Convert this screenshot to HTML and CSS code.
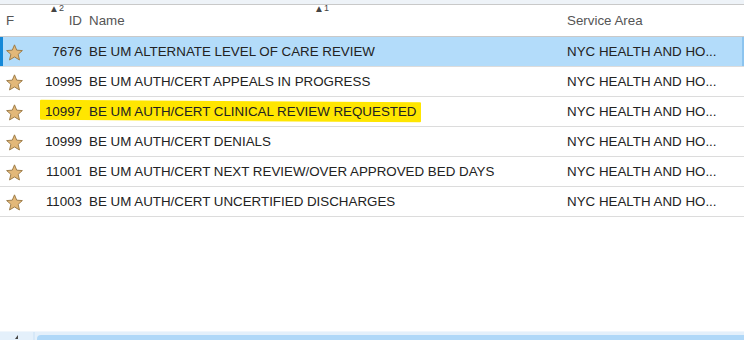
FILE: index.html
```html
<!DOCTYPE html>
<html>
<head>
<meta charset="utf-8">
<link rel="stylesheet" href="styles.css">
</head>
<body>
<div class="grid">
  <div class="topband"></div>
  <div class="row head">
    <div class="cell c-f">F</div>
    <div class="cell c-id"><span class="sort s-id">&#9650;<sup>2</sup></span>ID</div>
    <div class="cell c-name"><span class="sort s-name">&#9650;<sup>1</sup></span>Name</div>
    <div class="cell c-sa">Service Area</div>
  </div>
  <div class="body">
    <div class="row sel">
      <div class="cell c-f"><svg class="star" viewBox="0 0 16 16"><path d="M8 0.8l2.1 5 5.3.4-4 3.5 1.3 5.3L8 12.2l-4.7 2.8 1.3-5.3-4-3.5 5.3-.4z"/></svg></div>
      <div class="cell c-id">7676</div>
      <div class="cell c-name">BE UM ALTERNATE LEVEL OF CARE REVIEW</div>
      <div class="cell c-sa">NYC HEALTH AND HO...</div>
    </div>
    <div class="row">
      <div class="cell c-f"><svg class="star" viewBox="0 0 16 16"><path d="M8 0.8l2.1 5 5.3.4-4 3.5 1.3 5.3L8 12.2l-4.7 2.8 1.3-5.3-4-3.5 5.3-.4z"/></svg></div>
      <div class="cell c-id">10995</div>
      <div class="cell c-name">BE UM AUTH/CERT APPEALS IN PROGRESS</div>
      <div class="cell c-sa">NYC HEALTH AND HO...</div>
    </div>
    <div class="row">
      <div class="mark"></div>
      <div class="cell c-f"><svg class="star" viewBox="0 0 16 16"><path d="M8 0.8l2.1 5 5.3.4-4 3.5 1.3 5.3L8 12.2l-4.7 2.8 1.3-5.3-4-3.5 5.3-.4z"/></svg></div>
      <div class="cell c-id">10997</div>
      <div class="cell c-name">BE UM AUTH/CERT CLINICAL REVIEW REQUESTED</div>
      <div class="cell c-sa">NYC HEALTH AND HO...</div>
    </div>
    <div class="row">
      <div class="cell c-f"><svg class="star" viewBox="0 0 16 16"><path d="M8 0.8l2.1 5 5.3.4-4 3.5 1.3 5.3L8 12.2l-4.7 2.8 1.3-5.3-4-3.5 5.3-.4z"/></svg></div>
      <div class="cell c-id">10999</div>
      <div class="cell c-name">BE UM AUTH/CERT DENIALS</div>
      <div class="cell c-sa">NYC HEALTH AND HO...</div>
    </div>
    <div class="row">
      <div class="cell c-f"><svg class="star" viewBox="0 0 16 16"><path d="M8 0.8l2.1 5 5.3.4-4 3.5 1.3 5.3L8 12.2l-4.7 2.8 1.3-5.3-4-3.5 5.3-.4z"/></svg></div>
      <div class="cell c-id">11001</div>
      <div class="cell c-name">BE UM AUTH/CERT NEXT REVIEW/OVER APPROVED BED DAYS</div>
      <div class="cell c-sa">NYC HEALTH AND HO...</div>
    </div>
    <div class="row">
      <div class="cell c-f"><svg class="star" viewBox="0 0 16 16"><path d="M8 0.8l2.1 5 5.3.4-4 3.5 1.3 5.3L8 12.2l-4.7 2.8 1.3-5.3-4-3.5 5.3-.4z"/></svg></div>
      <div class="cell c-id">11003</div>
      <div class="cell c-name">BE UM AUTH/CERT UNCERTIFIED DISCHARGES</div>
      <div class="cell c-sa">NYC HEALTH AND HO...</div>
    </div>
  </div>
  <div class="hscroll">
    <div class="arrow-btn"><span class="arrow"></span></div>
    <div class="thumb"></div>
  </div>
</div>
</body>
</html>
```

FILE: styles.css
```css
html, body {
  margin: 0;
  padding: 0;
  background: #fff;
}
.grid {
  width: 744px;
  height: 340px;
  display: flex;
  flex-direction: column;
  font-family: "Liberation Sans", Arial, sans-serif;
  font-size: 13.35px;
  color: #222;
  overflow: hidden;
}
.topband {
  height: 4px;
  background: #eef3f8;
  border-bottom: 1px solid #c9c9c9;
  flex: none;
}
.row {
  position: relative;
  display: grid;
  grid-template-columns: 36px 47px 478px 183px;
  height: 29px;
  align-items: center;
  border-bottom: 1px solid #dcdcdc;
  flex: none;
}
.head {
  height: 31px;
  color: #555;
  border-bottom: 1px solid #c9c9c9;
}
.head .cell { padding-bottom: 0; }
.cell {
  position: relative;
  white-space: nowrap;
  z-index: 1;
}
.c-f { padding-left: 6px; }
.c-id { text-align: right; padding-right: 1px; }
.c-name { padding-left: 6px; }
.c-sa { padding-left: 6px; }
.sort {
  position: absolute;
  top: -8px;
  font-size: 10px;
  color: #444;
  line-height: 8px;
}
.sort sup {
  font-size: 9px;
  vertical-align: 0;
  position: relative;
  top: -1px;
  margin-left: 0;
}
.s-id { left: 13px; }
.s-name { left: 231px; }
.body {
  flex: 1;
}
.sel {
  background: #b3dcfa;
  box-shadow: inset 3px 0 0 #1488d8, inset -2px 0 0 #8cc4ef;
}
.star {
  width: 17px;
  height: 17px;
  display: block;
  margin-top: 1px;
}
.star path {
  fill: #e3b878;
  stroke: #9a7a46;
  stroke-width: 0.9;
  stroke-linejoin: round;
}
.mark {
  position: absolute;
  left: 40px;
  top: 4px;
  width: 381px;
  height: 20px;
  background: #ffe600;
  transform: skewY(0.4deg);
  border-radius: 1px;
  z-index: 0;
}
.hscroll {
  flex: none;
  height: 8px;
  display: flex;
  background: #e4f0fb;
  border-top: 1px solid #f0f6fc;
}
.arrow-btn {
  width: 33px;
  display: flex;
  justify-content: center;
  align-items: flex-end;
  border-right: 2px solid #d6e8f8;
}
.arrow {
  width: 0;
  height: 0;
  border-left: 3px solid transparent;
  border-bottom: 4px solid #444;
  margin-bottom: 1px;
}
.thumb {
  flex: 1;
  margin-left: 2px;
  margin-top: 3px;
  background: #b0d8f8;
  border-radius: 4px 0 0 0;
}
```
